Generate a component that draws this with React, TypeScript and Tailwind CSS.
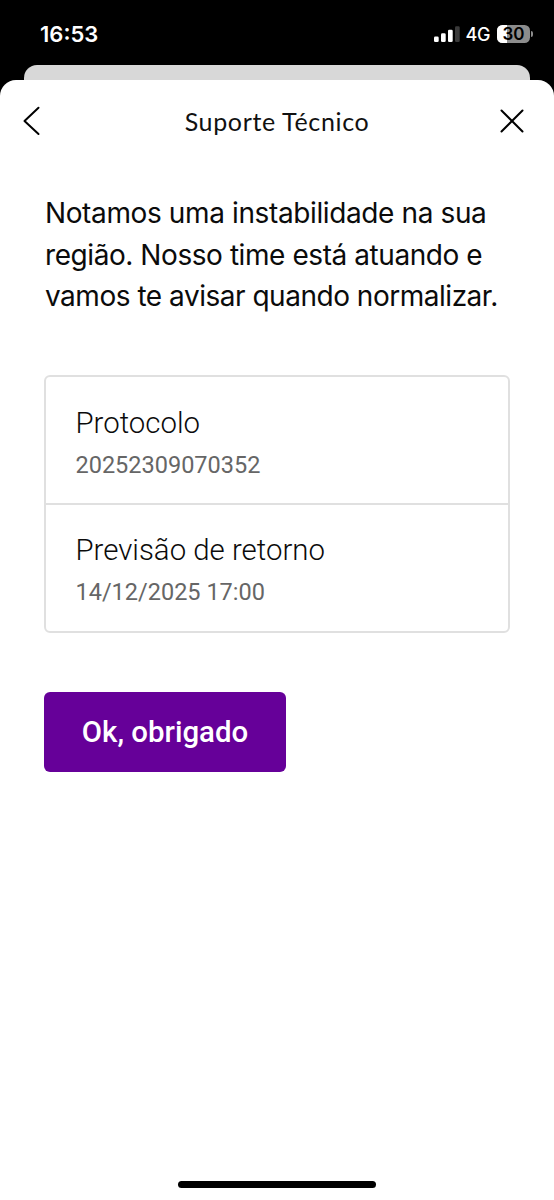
import type { ReactNode } from 'react';

const MESSAGE = [
  { text: 'Notamos uma instabilidade na sua', spacing: 'tracking-[-0.38px]' },
  { text: 'região. Nosso time está atuando e', spacing: 'tracking-[-0.43px]' },
  { text: 'vamos te avisar quando normalizar.', spacing: 'tracking-[-0.48px]' },
];

const DETAILS = [
  { label: 'Protocolo', value: '20252309070352', box: 'h-[128px] pt-[24px]' },
  { label: 'Previsão de retorno', value: '14/12/2025 17:00', box: 'h-[126px] pt-[23px]' },
];

function SignalIcon() {
  return (
    <svg width="26" height="17" viewBox="0 0 26 17" fill="#fff">
      <rect x="0" y="10.4" width="4.7" height="5.6" rx="1.3" />
      <rect x="7" y="7.2" width="4.7" height="8.8" rx="1.3" />
      <rect x="14" y="3.7" width="4.7" height="12.3" rx="1.3" />
      <rect x="21" y="0.2" width="4.7" height="15.8" rx="1.3" fill="#3a3a3a" />
    </svg>
  );
}

function Battery({ level }: { level: number }) {
  return (
    <div className="flex items-center gap-[1px]">
      <div className="relative h-[18px] w-[33px] overflow-hidden rounded-[5.5px] bg-[#8c8c8c]">
        <div className="h-full bg-white" style={{ width: `${level}%` }} />
        <span className="absolute inset-0 text-center text-[17px] font-semibold leading-[18px] text-black">{level}</span>
      </div>
      <div className="h-[6px] w-[2px] rounded-r-full bg-[#8c8c8c]" />
    </div>
  );
}

function StatusBar() {
  return (
    <div className="flex h-[65px] shrink-0 items-start justify-between pl-[40px] pr-[21px] pt-[21px] font-['Inter',sans-serif] text-white">
      <span className="text-[22px] font-semibold leading-[26px]">16:53</span>
      <div className="flex h-[26px] items-center">
        <SignalIcon />
        <span className="ml-[6px] mr-[7px] pt-[2px] text-[18px] font-medium leading-[28px] tracking-[-0.4px]">4G</span>
        <Battery level={30} />
      </div>
    </div>
  );
}

function SheetHeader({ children }: { children: ReactNode }) {
  return (
    <header className="flex h-[82px] shrink-0 items-center pl-[22px] pr-[30px]">
      <button aria-label="Voltar">
        <svg width="20" height="30" viewBox="0 0 20 30" fill="none" stroke="#000" strokeWidth="2" strokeLinecap="round" strokeLinejoin="round">
          <path d="M16.5 1.8 2.5 15l14 13" />
        </svg>
      </button>
      <h1 className="flex-1 whitespace-nowrap pl-[12px] text-center font-['Lato',sans-serif] text-[25px] leading-[30px] tracking-[0.65px] text-[#111]">
        {children}
      </h1>
      <button aria-label="Fechar">
        <svg width="24" height="24" viewBox="0 0 24 24" fill="none" stroke="#000" strokeWidth="2" strokeLinecap="round">
          <path d="M1.5 1.5l21 21M22.5 1.5l-21 21" />
        </svg>
      </button>
    </header>
  );
}

export default function App() {
  return (
    <div className="flex h-[1200px] w-[554px] flex-col overflow-hidden bg-black">
      <StatusBar />
      <div className="mx-[24px] h-[15px] shrink-0 rounded-t-[13px] bg-[#d8d8d8]" />
      <main className="flex flex-1 flex-col rounded-t-[16px] bg-white">
        <SheetHeader>Suporte Técnico</SheetHeader>

        <div className="px-[44px] pt-[31px]">
          <p className="whitespace-nowrap pl-px font-['Inter',sans-serif] text-[28px] leading-[41.5px] text-[#0b0b0b]">
            {MESSAGE.map(({ text, spacing }) => (
              <span key={text} className={`block ${spacing}`}>{text}</span>
            ))}
          </p>

          <dl className="mt-[57.5px] w-[466px] divide-y-2 divide-[#e0e0e0] rounded-[6px] border-2 border-[#e0e0e0] font-['Roboto',sans-serif]">
            {DETAILS.map(({ label, value, box }) => (
              <div key={label} className={`pl-[29.5px] ${box}`}>
                <dt className="text-[29.4px] font-light leading-[44px] text-[#0b0b0b]">{label}</dt>
                <dd className="text-[23.5px] leading-[40px] text-[#666]">{value}</dd>
              </div>
            ))}
          </dl>

          <button className="mt-[59px] h-[80px] w-[242px] rounded-[6px] bg-[#660099] font-['Roboto',sans-serif] text-[29.4px] font-medium text-white">
            Ok, obrigado
          </button>
        </div>

        <div className="mx-auto mb-[12px] mt-auto h-[7px] w-[198px] rounded-full bg-black" />
      </main>
    </div>
  );
}
